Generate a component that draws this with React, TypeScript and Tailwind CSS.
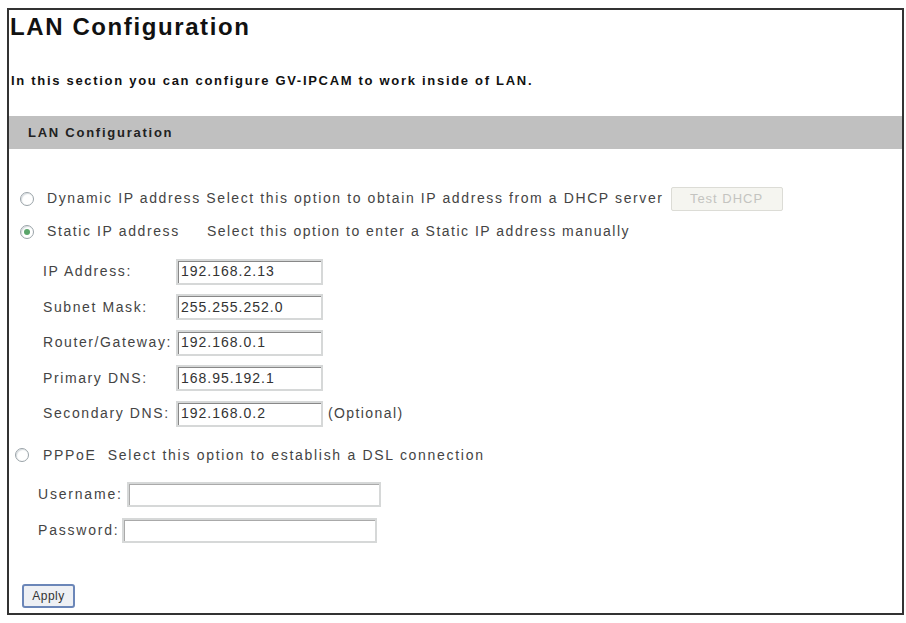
const font = { fontFamily: '"Liberation Sans", Arial, sans-serif' };

function Radio({ checked = false }: { checked?: boolean }) {
  return (
    <span className="flex h-[14px] w-[14px] shrink-0 items-center justify-center rounded-full border border-[#9aa3a8] bg-white shadow-[inset_1px_1px_1px_#d8dde0]">
      {checked && <span className="h-[6px] w-[6px] rounded-full bg-[#5aa56a]" />}
    </span>
  );
}

function Field({ label, value, after }: { label: string; value: string; after?: string }) {
  return (
    <div className="flex h-[35.5px] items-center">
      <span className="w-[167px] whitespace-nowrap pl-[34px] tracking-[1.6px] text-[#444]">{label}</span>
      <div className="flex h-[26px] w-[147px] items-center border-2 border-[#d6d8d8] bg-white pl-[3px] tracking-[1px] text-[#333] shadow-[inset_1px_1px_0_#888]">
        {value}
      </div>
      {after && <span className="ml-[5px] tracking-[1.4px] text-[#444]">{after}</span>}
    </div>
  );
}

export default function App() {
  return (
    <div className="min-h-[623px] bg-white pl-[7px] pt-[8px]" style={font}>
      <div className="flex h-[607px] w-[897px] flex-col border-2 border-[#333]">
        <h1 className="pl-[1px] pt-[2px] text-[24px] font-bold leading-[30px] tracking-[1.6px] text-[#111]">
          LAN Configuration
        </h1>
        <p className="mt-[32px] pl-[2px] text-[13px] font-bold leading-[14px] tracking-[1.7px] text-[#111]">
          In this section you can configure GV-IPCAM to work inside of LAN.
        </p>
        <div className="mt-[28px] flex h-[33px] items-center bg-[#c0c0c0] pl-[19px] text-[13px] font-bold tracking-[1.75px] text-[#222]">
          LAN Configuration
        </div>

        <div className="pl-[11px] pt-[33px] text-[14px] tracking-[1.6px] text-[#444]">
          <div className="flex h-[33px] items-center gap-[13px]">
            <Radio />
            <span className="whitespace-nowrap">
              Dynamic IP address Select this option to obtain IP address from a DHCP server
            </span>
            <button className="ml-[-6px] h-[24px] w-[112px] rounded-[2px] border border-[#dcdcd6] bg-[#f5f5f0] text-[13px] tracking-[1px] text-[#c4c4c0]">
              Test DHCP
            </button>
          </div>
          <div className="flex h-[33px] items-center gap-[13px]">
            <Radio checked />
            <span className="w-[147px] whitespace-nowrap">Static IP address</span>
            <span className="whitespace-nowrap tracking-[1.5px]">
              Select this option to enter a Static IP address manually
            </span>
          </div>
        </div>

        <div className="pt-[6px] text-[14px]">
          <Field label="IP Address:" value="192.168.2.13" />
          <Field label="Subnet Mask:" value="255.255.252.0" />
          <Field label="Router/Gateway:" value="192.168.0.1" />
          <Field label="Primary DNS:" value="168.95.192.1" />
          <Field label="Secondary DNS:" value="192.168.0.2" after="(Optional)" />
        </div>

        <div className="mt-[7px] flex h-[33px] items-center gap-[14px] pl-[6px] text-[14px] tracking-[1.7px] text-[#444]">
          <Radio />
          <span className="whitespace-nowrap">PPPoE&nbsp;&nbsp;Select this option to establish a DSL connection</span>
        </div>

        <div className="pt-[5px] text-[14px] tracking-[1.8px] text-[#444]">
          <div className="flex h-[36px] items-center pl-[29px]">
            <span className="w-[89px] whitespace-nowrap">Username:</span>
            <div className="h-[25px] w-[254px] border-2 border-[#d6d8d8] bg-white shadow-[inset_1px_1px_0_#aaa]" />
          </div>
          <div className="flex h-[36px] items-center pl-[29px]">
            <span className="w-[84px] whitespace-nowrap">Password:</span>
            <div className="h-[25px] w-[255px] border-2 border-[#d6d8d8] bg-white shadow-[inset_1px_1px_0_#aaa]" />
          </div>
        </div>

        <div className="pl-[13px] pt-[34px]">
          <button className="h-[24px] w-[53px] rounded-[3px] border-2 border-[#6b86b8] bg-[#eef0f4] text-[12px] tracking-[0.5px] text-[#333]">
            Apply
          </button>
        </div>
      </div>
    </div>
  );
}
